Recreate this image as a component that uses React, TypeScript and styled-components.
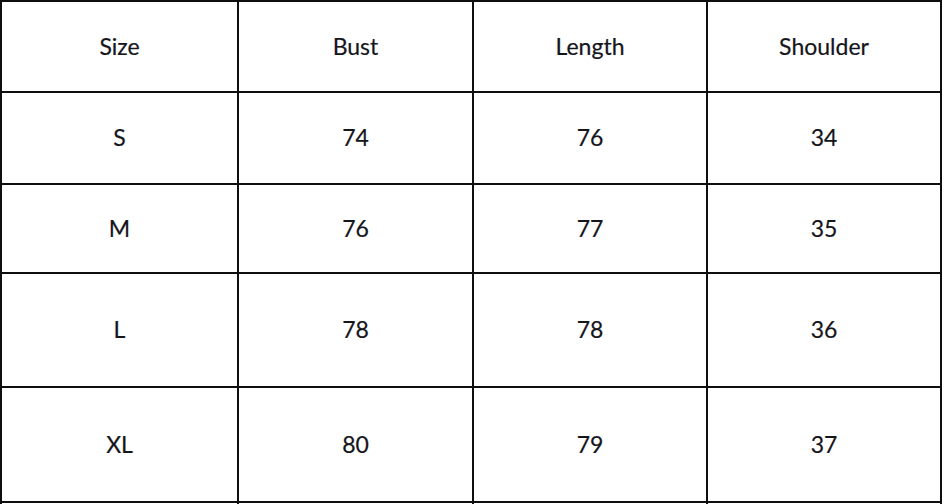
import React from "react";
import styled, { createGlobalStyle } from "styled-components";

const Global = createGlobalStyle`
  html, body {
    margin: 0;
    padding: 0;
    background: #ffffff;
    overflow: hidden;
  }
  body {
    font-family: Lato, "Open Sans", "Liberation Sans", sans-serif;
  }
`;

const Page = styled.div`
  width: 944px;
  height: 504px;
  overflow: hidden;
  background: #ffffff;
`;

const Grid = styled.div`
  display: grid;
  width: 942px;
  grid-template-columns: 235px 233px 232px 232px;
  grid-template-rows: 89px 90px 87px 112px 113px 60px;
  gap: 2px;
  padding: 2px 2px 0 2px;
  box-sizing: border-box;
  background: #0e0e0e;
`;

const Cell = styled.div`
  background: #ffffff;
  display: flex;
  align-items: center;
  justify-content: center;
  padding-bottom: 2px;
  font-family: Lato, "Open Sans", "Liberation Sans", sans-serif;
  font-size: 23px;
  color: #15151c;
  -webkit-text-stroke: 0.2px #15151c;
`;

const header = ["Size", "Bust", "Length", "Shoulder"];
const rows = [
  ["S", "74", "76", "34"],
  ["M", "76", "77", "35"],
  ["L", "78", "78", "36"],
  ["XL", "80", "79", "37"],
  ["", "", "", ""],
];

export default function App() {
  return (
    <Page>
      <Global />
      <Grid>
        {header.map((h) => (
          <Cell key={h}>{h}</Cell>
        ))}
        {rows.map((r, i) =>
          r.map((v, j) => <Cell key={`${i}-${j}`}>{v}</Cell>)
        )}
      </Grid>
    </Page>
  );
}
